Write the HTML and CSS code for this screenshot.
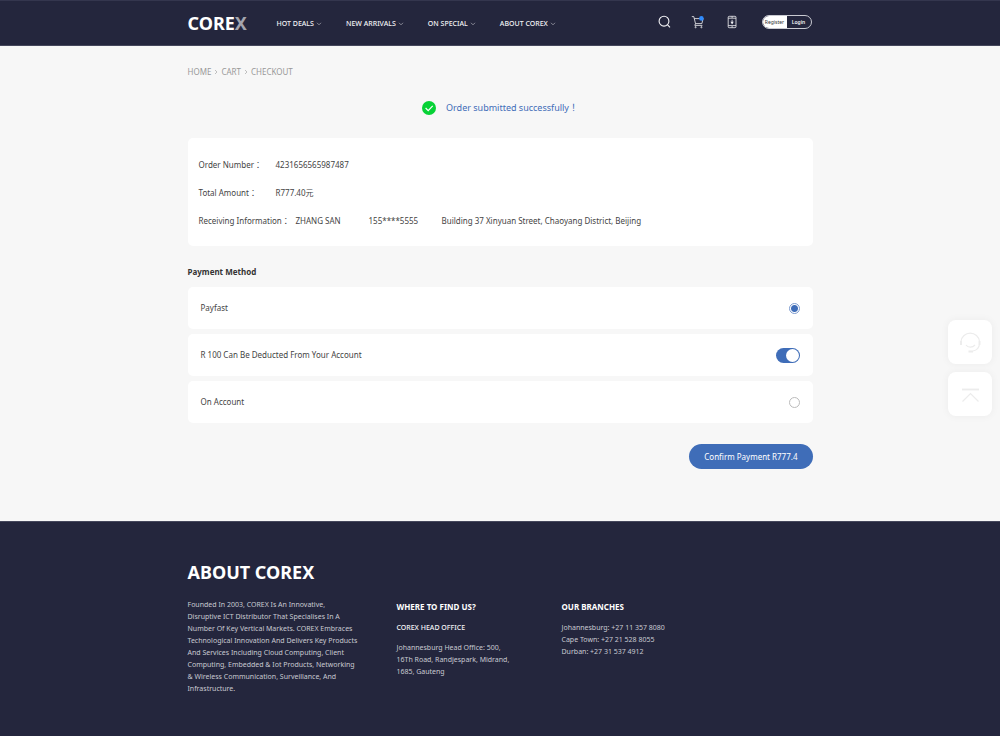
FILE: index.html
```html
<!DOCTYPE html>
<html lang="en">
<head>
<meta charset="utf-8">
<meta name="viewport" content="width=device-width, initial-scale=1">
<title>COREX - Checkout</title>
<link rel="stylesheet" href="styles.css">
</head>
<body>
<header class="site-header">
  <div class="container header-row">
    <a class="logo" href="#">CORE<span class="logo-x">X</span></a>
    <nav class="main-nav" aria-label="Main">
      <a href="#">HOT DEALS <svg class="chevron" viewBox="0 0 6 4"><path d="M1 .8l2 2 2-2"/></svg></a>
      <a href="#">NEW ARRIVALS <svg class="chevron" viewBox="0 0 6 4"><path d="M1 .8l2 2 2-2"/></svg></a>
      <a href="#">ON SPECIAL <svg class="chevron" viewBox="0 0 6 4"><path d="M1 .8l2 2 2-2"/></svg></a>
      <a href="#">ABOUT COREX <svg class="chevron" viewBox="0 0 6 4"><path d="M1 .8l2 2 2-2"/></svg></a>
    </nav>
    <div class="tools">
      <button class="icon-button" type="button" aria-label="Search">
        <svg viewBox="0 0 14 14"><circle cx="7" cy="6.200" r="4.900"/><path d="M10.600 9.800l2.400 2.600"/></svg>
      </button>
      <button class="icon-button" type="button" aria-label="Cart">
        <svg class="thin" viewBox="0 0 14 14"><path d="M.8 1.600h2l1.700 7h6.400l1.200-5.200M3.300 3.600h5.600M4.500 8.600l-.7 1.800h7.600"/><circle cx="4.600" cy="12.200" r=".6"/><circle cx="10.400" cy="12.200" r=".6"/><circle class="cart-dot" cx="10.400" cy="3.400" r="2.300"/></svg>
      </button>
      <button class="icon-button" type="button" aria-label="Mobile app">
        <svg class="thin" viewBox="0 0 14 14"><rect x="3.200" y="1.300" width="7.800" height="11.400" rx="1"/><path d="M3.200 3.200H11M3.200 10.600H11M7.100 4.800v4.400M7.100 11v1.600M7.100 1.300v1.600"/><path class="solid" d="M5.400 6.800h3.400L7.100 9z"/></svg>
      </button>
      <div class="account">
        <a class="register" href="#">Register</a>
        <a class="login" href="#">Login</a>
      </div>
    </div>
  </div>
</header>

<main class="container page">
  <nav class="breadcrumb" aria-label="Breadcrumb">
    <a href="#">HOME</a>
    <svg class="crumb-arrow" viewBox="0 0 4 6"><path d="M1 1l2 2-2 2"/></svg>
    <a href="#">CART</a>
    <svg class="crumb-arrow" viewBox="0 0 4 6"><path d="M1 1l2 2-2 2"/></svg>
    <a href="#">CHECKOUT</a>
  </nav>

  <p class="notice">
    <svg class="notice-icon" viewBox="0 0 14 14"><circle cx="7" cy="7" r="7"/><path d="M3.6 7l2.6 2.6 4.5-4.8"/></svg>
    <span>Order submitted successfully！</span>
  </p>

  <dl class="card order">
    <div class="order-row"><dt>Order Number：</dt><dd>4231656565987487</dd></div>
    <div class="order-row"><dt>Total Amount：</dt><dd>R777.40元</dd></div>
    <div class="order-row receiving"><dt>Receiving Information：</dt><dd>ZHANG SAN</dd><dd>155****5555</dd><dd>Building 37 Xinyuan Street, Chaoyang District, Beijing</dd></div>
  </dl>

  <form class="payment">
    <h2>Payment Method</h2>
    <div class="options">
      <label class="card option"><span>Payfast</span><input class="radio" type="radio" name="method" checked></label>
      <label class="card option"><span>R 100 Can Be Deducted From Your Account</span><input class="switch" type="checkbox" role="switch" checked></label>
      <label class="card option"><span>On Account</span><input class="radio" type="radio" name="method"></label>
    </div>
    <button class="confirm" type="button">Confirm Payment R777.4</button>
  </form>
</main>

<aside class="float-tools">
  <button type="button" aria-label="Customer service">
    <svg viewBox="0 0 24 24"><path d="M3 11.500a9.300 9.300 0 0 1 18.500 0v2.500a8 8 0 0 1-6.500 7"/><path class="thick" d="M3 11v4M21.500 11v4M10.500 21.500h4.500"/><path d="M8 15c2 2.800 6.500 2.800 9 0"/></svg>
  </button>
  <button type="button" aria-label="Back to top">
    <svg viewBox="0 0 24 24"><path class="thick" d="M4 7.500h17"/><path d="M4.500 19.500l8-8 8 8"/></svg>
  </button>
</aside>

<footer class="site-footer">
  <div class="container">
    <h2>ABOUT COREX</h2>
    <div class="footer-columns">
      <p class="about">Founded In 2003, COREX Is An Innovative,<br>Disruptive ICT Distributor That Specialises In A<br>Number Of Key Vertical Markets. COREX Embraces<br>Technological Innovation And Delivers Key Products<br>And Services Including Cloud Computing, Client<br>Computing, Embedded &amp; Iot Products, Networking<br>&amp; Wireless Communication, Surveillance, And<br>Infrastructure.</p>
      <section>
        <h3>WHERE TO FIND US?</h3>
        <h4>COREX HEAD OFFICE</h4>
        <p>Johannesburg Head Office: 500,<br>16Th Road, Randjespark, Midrand,<br>1685, Gauteng</p>
      </section>
      <section>
        <h3>OUR BRANCHES</h3>
        <p>Johannesburg: +27 11 357 8080<br>Cape Town: +27 21 528 8055<br>Durban: +27 31 537 4912</p>
      </section>
    </div>
  </div>
</footer>
</body>
</html>
```
FILE: styles.css
```css
* { box-sizing: border-box; }
body, h2, h3, h4, p, dl, dd { margin: 0; }
body {
  min-height: 100vh;
  display: flex;
  flex-direction: column;
  background: #f7f7f7;
  color: #444;
  font: 8px/12px "Noto Sans", "Noto Sans CJK TC", sans-serif;
}
a { color: inherit; text-decoration: none; }
button { font: inherit; border: 0; padding: 0; cursor: pointer; }
svg { fill: none; stroke: currentColor; }
.container { width: 62.5%; margin: 0 auto; }

.site-header {
  background: #24263d;
  border-top: 1px solid #34364e;
  border-bottom: 1px solid #45475c;
  color: #f2f2f5;
}
.header-row { display: flex; align-items: center; height: 44px; }
.logo { width: 89px; font-size: 18px; line-height: 24px; font-weight: 700; color: #fff; }
.logo-x { color: #a3a4ae; }
.main-nav { display: flex; gap: 24px; padding-top: 1px; font-size: 7px; font-weight: 500; white-space: nowrap; }
.main-nav a { display: flex; align-items: center; gap: 2px; }
.chevron { width: 6px; height: 4px; stroke-width: .7; opacity: .7; }
.tools { display: flex; align-items: center; gap: 20px; margin: 0 1px 2px auto; }
.icon-button { width: 14px; height: 14px; background: none; color: #f2f2f5; }
.icon-button svg { display: block; width: 14px; height: 14px; stroke-width: 1.100; }
.icon-button .thin { stroke-width: .8; }
.icon-button .cart-dot { fill: #2f8cff; stroke: none; }
.icon-button .solid { fill: currentColor; stroke: none; }
.account {
  display: flex;
  width: 50px;
  height: 14px;
  margin-left: 3px;
  border: 1px solid #c9cad2;
  border-radius: 7px;
  overflow: hidden;
  font-size: 5px;
  text-align: center;
}
.register { flex: 1; background: #fff; color: #333; }
.login { flex: 1; font-weight: 600; }

.page { flex: 1; padding-top: 20px; }
.breadcrumb { display: flex; align-items: center; gap: 3px; color: #999; }
.crumb-arrow { width: 4px; height: 6px; stroke-width: .6; }
.notice { display: flex; align-items: center; justify-content: center; gap: 10px; margin-top: 22px; color: #3f6db8; font-size: 9px; line-height: 16px; }
.notice-icon { width: 14px; height: 14px; fill: #07d236; stroke: none; }
.notice-icon path { fill: none; stroke: #fff; stroke-width: 1.200; }

.card { background: #fff; border-radius: 5px; }
.order { display: grid; gap: 16px; margin-top: 22px; padding: 21px 11px 19px; }
.order-row { display: flex; }
.order-row dt { width: 77px; white-space: nowrap; }
.receiving dt { width: 97px; }
.receiving dd { width: 73px; white-space: nowrap; }

.payment { display: flex; flex-direction: column; margin-top: 20px; }
.payment h2 { font-size: 8px; font-weight: 700; color: #333; }
.options { display: grid; gap: 5px; margin-top: 9px; }
.option { display: flex; align-items: center; justify-content: space-between; height: 42px; padding: 0 13px; }
.radio, .switch { appearance: none; margin: 0; }
.radio { width: 11px; height: 11px; border: 1px solid #bbb; border-radius: 50%; }
.radio:checked { border-color: #7d9bcf; background: radial-gradient(circle, #3f6db8 3px, #fff 4px); }
.switch { display: flex; justify-content: flex-end; width: 24px; height: 15px; padding: 1px; border-radius: 8px; background: #3f6db8; }
.switch::before { content: ""; width: 13px; height: 13px; border-radius: 50%; background: #fff; }
.switch:not(:checked) { justify-content: flex-start; background: #bbb; }
.confirm { align-self: flex-end; margin-top: 21px; padding: 6px 15px; border-radius: 13px; background: #3f6db8; color: #fff; line-height: 13px; }

.float-tools { position: fixed; top: 320px; right: 8px; display: grid; gap: 8px; }
.float-tools button { display: grid; place-items: center; width: 44px; height: 44px; border-radius: 8px; background: #fff; color: #ececec; box-shadow: 0 0 8px rgba(0, 0, 0, .05); }
.float-tools svg { width: 24px; height: 24px; stroke-width: 1.200; }
.float-tools .thick { stroke-width: 1.800; }

.site-footer { padding: 39px 0 39px; border-top: 1px solid #45475c; background: #24263d; color: #c9cad2; font-size: 7px; }
.site-footer h2 { font-size: 18px; line-height: 22px; font-weight: 700; color: #fff; }
.footer-columns { display: flex; margin-top: 16px; white-space: nowrap; }
.footer-columns section { width: 165px; padding-top: 2px; }
.footer-columns .about { width: 209px; padding-bottom: 2px; }
.site-footer h3 { margin-bottom: 9px; color: #fff; font-size: 8px; font-weight: 700; }
.site-footer h4 { margin-bottom: 8px; color: #f2f2f5; font-size: 7px; font-weight: 500; }
```
